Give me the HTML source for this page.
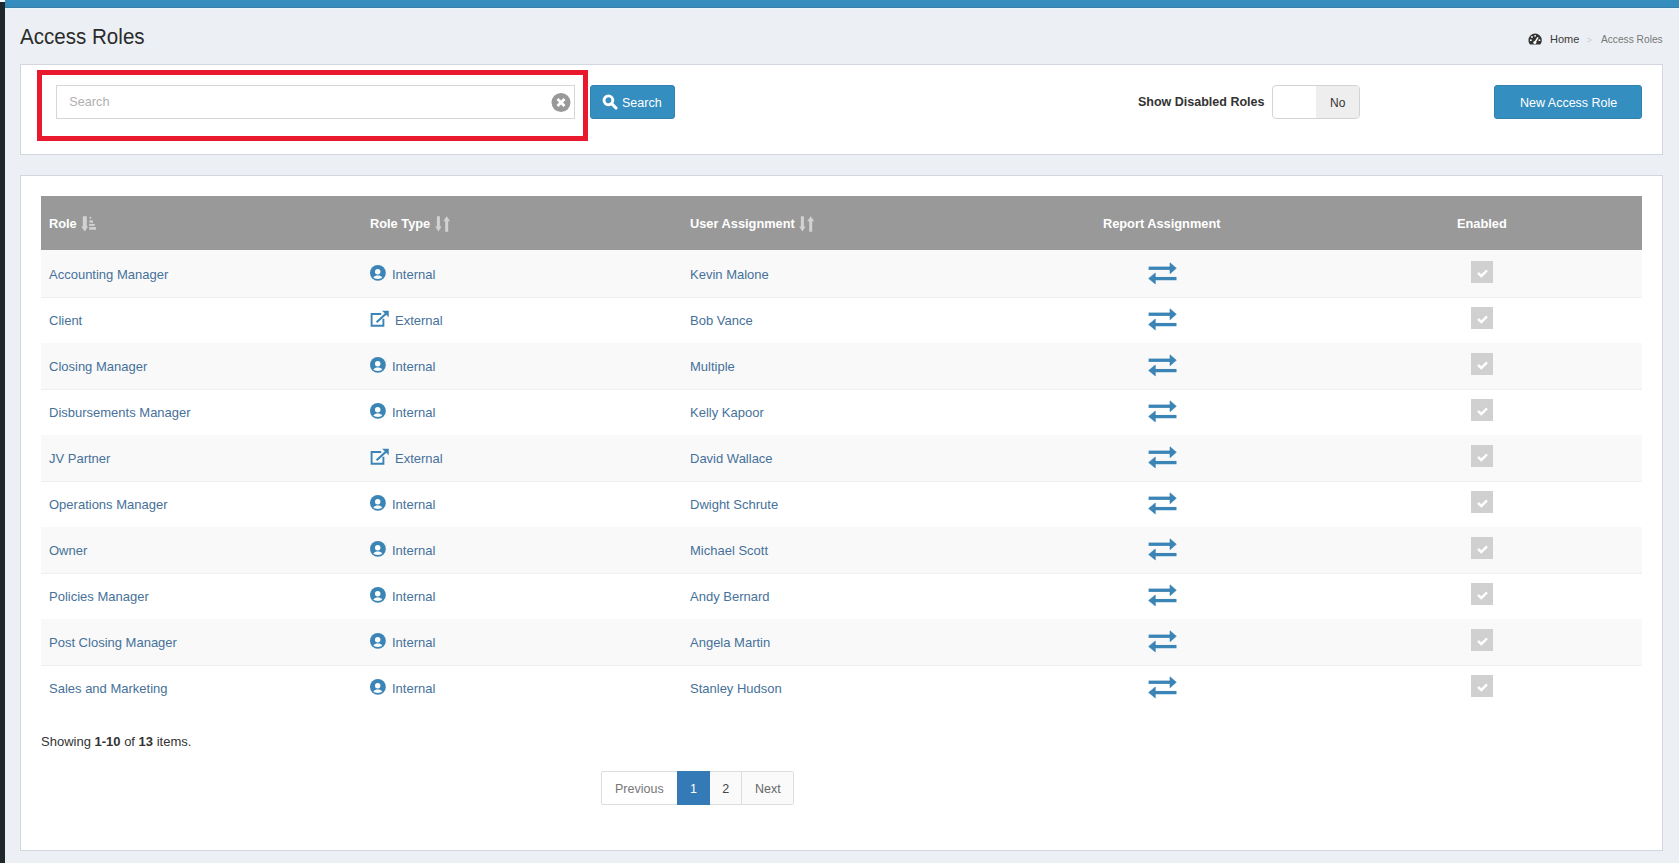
<!DOCTYPE html>
<html>
<head>
<meta charset="utf-8">
<style>
*{box-sizing:border-box;margin:0;padding:0}
html,body{width:1679px;height:863px;overflow:hidden}
body{background:#ecf0f5;font-family:"Liberation Sans",sans-serif;color:#333;position:relative}
.a{position:absolute;white-space:nowrap;line-height:20px}
.strip{position:absolute;left:0;top:2px;width:5px;height:861px;background:#1e282c}
.topbar{position:absolute;left:5px;top:0;width:1674px;height:8px;background:#348dbd;border-bottom:1px solid #3a7fa8}
.topline{position:absolute;left:5px;top:8px;width:1674px;height:1px;background:#e6f6fb}
.box{position:absolute;left:20px;width:1643px;background:#fff;border:1px solid #d2d6de}
.btn{position:absolute;background:#358ec0;border:1px solid #3282b0;border-radius:3px;color:#fff}
.th{position:absolute;top:196px;left:41px;width:1601px;height:54px;background:#999}
.row{position:absolute;left:41px;width:1601px;height:46px;border-top:1px solid #efefef}
.odd{background:#f9f9f9}
.lnk{color:#46719a;font-size:13px}
.hd{color:#fff;font-weight:bold;font-size:12.8px}
</style>
</head>
<body>
<div class="strip"></div><div style="position:absolute;left:0;top:0;width:5px;height:2px;background:#f4fbff"></div>
<div class="topbar"></div><div class="topline"></div>

<div class="a" style="left:20px;top:26.6px;font-size:22px;color:#2b2b2b;transform:scaleX(0.935);transform-origin:0 0">Access Roles</div>

<!-- breadcrumb -->
<svg class="a" style="left:1528.3px;top:32.6px;transform:scale(0.95);transform-origin:0 0" width="15" height="13" viewBox="0 0 15 13">
  <path d="M7.5 0.5 A7 7 0 0 0 0.5 7.5 C0.5 9.5 1.2 11 2.2 12 L12.8 12 C13.8 11 14.5 9.5 14.5 7.5 A7 7 0 0 0 7.5 0.5 Z" fill="#333"/>
  <circle cx="3" cy="7.5" r="1" fill="#fff"/><circle cx="4.2" cy="4.2" r="1" fill="#fff"/><circle cx="7.5" cy="3" r="1" fill="#fff"/><circle cx="12" cy="7.5" r="1" fill="#fff"/>
  <path d="M7 10.5 L10.5 4.5" stroke="#fff" stroke-width="1.6"/><circle cx="7.2" cy="10" r="1.6" fill="#fff"/>
</svg>
<div class="a" style="left:1550px;top:29px;font-size:11px;color:#3a3a3a">Home</div>
<div class="a" style="left:1586.5px;top:30px;font-size:9.5px;color:#ccc">&gt;</div>
<div class="a" style="left:1601px;top:29px;font-size:11px;color:#777;transform:scaleX(0.925);transform-origin:0 0">Access Roles</div>

<!-- box 1 -->
<div class="box" style="top:64px;height:91px"></div>
<div style="position:absolute;left:37px;top:70px;width:551px;height:71px;border:5px solid #e8192c"></div>
<div style="position:absolute;left:56px;top:85px;width:519px;height:34px;border:1px solid #d6d6d6;background:#fff"></div>
<div class="a" style="left:69.3px;top:92.4px;font-size:12.7px;color:#b0b0b0">Search</div>
<svg class="a" style="left:551px;top:93px" width="20" height="20" viewBox="0 0 20 20">
  <circle cx="10" cy="9.5" r="9.5" fill="#999"/>
  <path d="M6.5 6 L13.5 13 M13.5 6 L6.5 13" stroke="#fff" stroke-width="2.8"/>
</svg>
<div class="btn" style="left:590px;top:85px;width:85px;height:34px"></div>
<svg class="a" style="left:602px;top:94px" width="16" height="16" viewBox="0 0 16 16">
  <circle cx="6.4" cy="6.3" r="4.4" fill="none" stroke="#fff" stroke-width="2.9"/>
  <path d="M9.6 9.6 L14 14" stroke="#fff" stroke-width="3.1" stroke-linecap="round"/>
</svg>
<div class="a" style="left:622px;top:92.6px;font-size:12.5px;color:#fff">Search</div>

<div class="a" style="left:1138px;top:91.9px;font-size:12.5px;font-weight:bold;color:#333">Show Disabled Roles</div>
<div style="position:absolute;left:1272px;top:85px;width:88px;height:34px;border:1px solid #d3d3d3;border-radius:4px;background:#fff;overflow:hidden">
  <div style="position:absolute;left:43px;top:0;width:45px;height:34px;background:#eee"></div>
</div>
<div class="a" style="left:1330px;top:92.7px;font-size:12px;color:#333">No</div>

<div class="btn" style="left:1494px;top:85px;width:148px;height:34px"></div>
<div class="a" style="left:1520px;top:92.6px;font-size:12.5px;color:#fff">New Access Role</div>

<!-- box 2 -->
<div class="box" style="top:175px;height:676px"></div>
<div class="th"></div>
<!--ROWS-->
<div class="a hd" style="left:49px;top:213.9px">Role</div>
<svg class="a" style="left:81px;top:216px" width="16" height="16" viewBox="0 0 16 16"><path d="M1.8 0.3 H5.8 V10.6 H7 L3.8 15.5 L0.2 10.6 H1.8 Z" fill="#d2d2d2"/><rect x="8.6" y="0.8" width="1.6" height="2" fill="#d2d2d2"/><rect x="8.4" y="4.4" width="3.6" height="2.2" fill="#d2d2d2"/><rect x="8.2" y="7.9" width="5.5" height="2" fill="#d2d2d2"/><rect x="8.2" y="11.1" width="6.8" height="2.6" fill="#d2d2d2"/></svg>
<div class="a hd" style="left:370px;top:213.9px">Role Type</div>
<svg class="a" style="left:434.5px;top:216px" width="16" height="16" viewBox="0 0 16 16"><path d="M1.9 0.3 H4.9 V10.6 H6.6 L3.4 15.6 L0.2 10.6 H1.9 Z M10.2 15.8 H13.2 V5.3 H15.1 L11.7 0.2 L8.3 5.3 H10.2 Z" fill="#d2d2d2"/></svg>
<div class="a hd" style="left:690px;top:213.9px">User Assignment</div>
<svg class="a" style="left:799px;top:216px" width="16" height="16" viewBox="0 0 16 16"><path d="M1.9 0.3 H4.9 V10.6 H6.6 L3.4 15.6 L0.2 10.6 H1.9 Z M10.2 15.8 H13.2 V5.3 H15.1 L11.7 0.2 L8.3 5.3 H10.2 Z" fill="#d2d2d2"/></svg>
<div class="a hd" style="left:1001.6px;width:320.2px;text-align:center;top:213.9px">Report Assignment</div>
<div class="a hd" style="left:1321.8px;width:320.2px;text-align:center;top:213.9px">Enabled</div>
<div class="row odd" style="top:251px;border-top-color:#f9f9f9;top:250px;height:47px"></div>
<div class="a lnk" style="left:49px;top:265.0px">Accounting Manager</div>
<svg class="a" style="left:370px;top:265px" width="16" height="16" viewBox="0 0 16 16"><circle cx="7.9" cy="7.9" r="7.9" fill="#3a84b6"/><circle cx="7.7" cy="6.7" r="2.75" fill="#fff"/><path d="M3.4 12.5 C4.4 11.1 5.9 10.5 7.8 10.5 C9.7 10.5 11.2 11.1 12.2 12.5 C11.2 13.5 9.6 13.9 7.8 13.9 C6 13.9 4.4 13.5 3.4 12.5 Z" fill="#fff"/></svg>
<div class="a lnk" style="left:392px;top:265.0px">Internal</div>
<div class="a lnk" style="left:690px;top:265.0px">Kevin Malone</div>
<svg class="a" style="left:1147.5px;top:262px" width="30" height="23" viewBox="0 0 30 23"><path d="M0.6 6.25 H23" stroke="#3a84b6" stroke-width="3.3"/><path d="M22 0.8 L28.3 6.25 L22 11.7 Z" fill="#3a84b6" stroke="#3a84b6" stroke-width="0.6" stroke-linejoin="round"/><path d="M6.5 16.6 H28.5" stroke="#3a84b6" stroke-width="3.3"/><path d="M7.3 11 L0.6 16.5 L7.3 21.9 Z" fill="#3a84b6" stroke="#3a84b6" stroke-width="0.6" stroke-linejoin="round"/></svg>
<svg class="a" style="left:1471px;top:261px" width="22" height="22" viewBox="0 0 22 22"><rect width="22" height="22" fill="#d0d0d0"/><path d="M7 12 L10.3 15 L16 9.3" fill="none" stroke="#fff" stroke-width="2.4"/></svg>
<div class="row" style="top:297px"></div>
<div class="a lnk" style="left:49px;top:311.0px">Client</div>
<svg class="a" style="left:369.5px;top:310px" width="19" height="17" viewBox="0 0 19 17"><path d="M11.2 3.95 H1.6 V15.7 H13.4 V8.8" fill="none" stroke="#3a84b6" stroke-width="1.9"/><path d="M6.6 12.2 L16.2 3.4" stroke="#3a84b6" stroke-width="2.1"/><path d="M12.6 1 H18.5 V6.8 Z" fill="#3a84b6" stroke="#3a84b6" stroke-width="0.5"/></svg>
<div class="a lnk" style="left:395px;top:311.0px">External</div>
<div class="a lnk" style="left:690px;top:311.0px">Bob Vance</div>
<svg class="a" style="left:1147.5px;top:308px" width="30" height="23" viewBox="0 0 30 23"><path d="M0.6 6.25 H23" stroke="#3a84b6" stroke-width="3.3"/><path d="M22 0.8 L28.3 6.25 L22 11.7 Z" fill="#3a84b6" stroke="#3a84b6" stroke-width="0.6" stroke-linejoin="round"/><path d="M6.5 16.6 H28.5" stroke="#3a84b6" stroke-width="3.3"/><path d="M7.3 11 L0.6 16.5 L7.3 21.9 Z" fill="#3a84b6" stroke="#3a84b6" stroke-width="0.6" stroke-linejoin="round"/></svg>
<svg class="a" style="left:1471px;top:307px" width="22" height="22" viewBox="0 0 22 22"><rect width="22" height="22" fill="#d0d0d0"/><path d="M7 12 L10.3 15 L16 9.3" fill="none" stroke="#fff" stroke-width="2.4"/></svg>
<div class="row odd" style="top:343px;border-top-color:#f9f9f9"></div>
<div class="a lnk" style="left:49px;top:357.0px">Closing Manager</div>
<svg class="a" style="left:370px;top:357px" width="16" height="16" viewBox="0 0 16 16"><circle cx="7.9" cy="7.9" r="7.9" fill="#3a84b6"/><circle cx="7.7" cy="6.7" r="2.75" fill="#fff"/><path d="M3.4 12.5 C4.4 11.1 5.9 10.5 7.8 10.5 C9.7 10.5 11.2 11.1 12.2 12.5 C11.2 13.5 9.6 13.9 7.8 13.9 C6 13.9 4.4 13.5 3.4 12.5 Z" fill="#fff"/></svg>
<div class="a lnk" style="left:392px;top:357.0px">Internal</div>
<div class="a lnk" style="left:690px;top:357.0px">Multiple</div>
<svg class="a" style="left:1147.5px;top:354px" width="30" height="23" viewBox="0 0 30 23"><path d="M0.6 6.25 H23" stroke="#3a84b6" stroke-width="3.3"/><path d="M22 0.8 L28.3 6.25 L22 11.7 Z" fill="#3a84b6" stroke="#3a84b6" stroke-width="0.6" stroke-linejoin="round"/><path d="M6.5 16.6 H28.5" stroke="#3a84b6" stroke-width="3.3"/><path d="M7.3 11 L0.6 16.5 L7.3 21.9 Z" fill="#3a84b6" stroke="#3a84b6" stroke-width="0.6" stroke-linejoin="round"/></svg>
<svg class="a" style="left:1471px;top:353px" width="22" height="22" viewBox="0 0 22 22"><rect width="22" height="22" fill="#d0d0d0"/><path d="M7 12 L10.3 15 L16 9.3" fill="none" stroke="#fff" stroke-width="2.4"/></svg>
<div class="row" style="top:389px"></div>
<div class="a lnk" style="left:49px;top:403.0px">Disbursements Manager</div>
<svg class="a" style="left:370px;top:403px" width="16" height="16" viewBox="0 0 16 16"><circle cx="7.9" cy="7.9" r="7.9" fill="#3a84b6"/><circle cx="7.7" cy="6.7" r="2.75" fill="#fff"/><path d="M3.4 12.5 C4.4 11.1 5.9 10.5 7.8 10.5 C9.7 10.5 11.2 11.1 12.2 12.5 C11.2 13.5 9.6 13.9 7.8 13.9 C6 13.9 4.4 13.5 3.4 12.5 Z" fill="#fff"/></svg>
<div class="a lnk" style="left:392px;top:403.0px">Internal</div>
<div class="a lnk" style="left:690px;top:403.0px">Kelly Kapoor</div>
<svg class="a" style="left:1147.5px;top:400px" width="30" height="23" viewBox="0 0 30 23"><path d="M0.6 6.25 H23" stroke="#3a84b6" stroke-width="3.3"/><path d="M22 0.8 L28.3 6.25 L22 11.7 Z" fill="#3a84b6" stroke="#3a84b6" stroke-width="0.6" stroke-linejoin="round"/><path d="M6.5 16.6 H28.5" stroke="#3a84b6" stroke-width="3.3"/><path d="M7.3 11 L0.6 16.5 L7.3 21.9 Z" fill="#3a84b6" stroke="#3a84b6" stroke-width="0.6" stroke-linejoin="round"/></svg>
<svg class="a" style="left:1471px;top:399px" width="22" height="22" viewBox="0 0 22 22"><rect width="22" height="22" fill="#d0d0d0"/><path d="M7 12 L10.3 15 L16 9.3" fill="none" stroke="#fff" stroke-width="2.4"/></svg>
<div class="row odd" style="top:435px;border-top-color:#f9f9f9"></div>
<div class="a lnk" style="left:49px;top:449.0px">JV Partner</div>
<svg class="a" style="left:369.5px;top:448px" width="19" height="17" viewBox="0 0 19 17"><path d="M11.2 3.95 H1.6 V15.7 H13.4 V8.8" fill="none" stroke="#3a84b6" stroke-width="1.9"/><path d="M6.6 12.2 L16.2 3.4" stroke="#3a84b6" stroke-width="2.1"/><path d="M12.6 1 H18.5 V6.8 Z" fill="#3a84b6" stroke="#3a84b6" stroke-width="0.5"/></svg>
<div class="a lnk" style="left:395px;top:449.0px">External</div>
<div class="a lnk" style="left:690px;top:449.0px">David Wallace</div>
<svg class="a" style="left:1147.5px;top:446px" width="30" height="23" viewBox="0 0 30 23"><path d="M0.6 6.25 H23" stroke="#3a84b6" stroke-width="3.3"/><path d="M22 0.8 L28.3 6.25 L22 11.7 Z" fill="#3a84b6" stroke="#3a84b6" stroke-width="0.6" stroke-linejoin="round"/><path d="M6.5 16.6 H28.5" stroke="#3a84b6" stroke-width="3.3"/><path d="M7.3 11 L0.6 16.5 L7.3 21.9 Z" fill="#3a84b6" stroke="#3a84b6" stroke-width="0.6" stroke-linejoin="round"/></svg>
<svg class="a" style="left:1471px;top:445px" width="22" height="22" viewBox="0 0 22 22"><rect width="22" height="22" fill="#d0d0d0"/><path d="M7 12 L10.3 15 L16 9.3" fill="none" stroke="#fff" stroke-width="2.4"/></svg>
<div class="row" style="top:481px"></div>
<div class="a lnk" style="left:49px;top:495.0px">Operations Manager</div>
<svg class="a" style="left:370px;top:495px" width="16" height="16" viewBox="0 0 16 16"><circle cx="7.9" cy="7.9" r="7.9" fill="#3a84b6"/><circle cx="7.7" cy="6.7" r="2.75" fill="#fff"/><path d="M3.4 12.5 C4.4 11.1 5.9 10.5 7.8 10.5 C9.7 10.5 11.2 11.1 12.2 12.5 C11.2 13.5 9.6 13.9 7.8 13.9 C6 13.9 4.4 13.5 3.4 12.5 Z" fill="#fff"/></svg>
<div class="a lnk" style="left:392px;top:495.0px">Internal</div>
<div class="a lnk" style="left:690px;top:495.0px">Dwight Schrute</div>
<svg class="a" style="left:1147.5px;top:492px" width="30" height="23" viewBox="0 0 30 23"><path d="M0.6 6.25 H23" stroke="#3a84b6" stroke-width="3.3"/><path d="M22 0.8 L28.3 6.25 L22 11.7 Z" fill="#3a84b6" stroke="#3a84b6" stroke-width="0.6" stroke-linejoin="round"/><path d="M6.5 16.6 H28.5" stroke="#3a84b6" stroke-width="3.3"/><path d="M7.3 11 L0.6 16.5 L7.3 21.9 Z" fill="#3a84b6" stroke="#3a84b6" stroke-width="0.6" stroke-linejoin="round"/></svg>
<svg class="a" style="left:1471px;top:491px" width="22" height="22" viewBox="0 0 22 22"><rect width="22" height="22" fill="#d0d0d0"/><path d="M7 12 L10.3 15 L16 9.3" fill="none" stroke="#fff" stroke-width="2.4"/></svg>
<div class="row odd" style="top:527px;border-top-color:#f9f9f9"></div>
<div class="a lnk" style="left:49px;top:541.0px">Owner</div>
<svg class="a" style="left:370px;top:541px" width="16" height="16" viewBox="0 0 16 16"><circle cx="7.9" cy="7.9" r="7.9" fill="#3a84b6"/><circle cx="7.7" cy="6.7" r="2.75" fill="#fff"/><path d="M3.4 12.5 C4.4 11.1 5.9 10.5 7.8 10.5 C9.7 10.5 11.2 11.1 12.2 12.5 C11.2 13.5 9.6 13.9 7.8 13.9 C6 13.9 4.4 13.5 3.4 12.5 Z" fill="#fff"/></svg>
<div class="a lnk" style="left:392px;top:541.0px">Internal</div>
<div class="a lnk" style="left:690px;top:541.0px">Michael Scott</div>
<svg class="a" style="left:1147.5px;top:538px" width="30" height="23" viewBox="0 0 30 23"><path d="M0.6 6.25 H23" stroke="#3a84b6" stroke-width="3.3"/><path d="M22 0.8 L28.3 6.25 L22 11.7 Z" fill="#3a84b6" stroke="#3a84b6" stroke-width="0.6" stroke-linejoin="round"/><path d="M6.5 16.6 H28.5" stroke="#3a84b6" stroke-width="3.3"/><path d="M7.3 11 L0.6 16.5 L7.3 21.9 Z" fill="#3a84b6" stroke="#3a84b6" stroke-width="0.6" stroke-linejoin="round"/></svg>
<svg class="a" style="left:1471px;top:537px" width="22" height="22" viewBox="0 0 22 22"><rect width="22" height="22" fill="#d0d0d0"/><path d="M7 12 L10.3 15 L16 9.3" fill="none" stroke="#fff" stroke-width="2.4"/></svg>
<div class="row" style="top:573px"></div>
<div class="a lnk" style="left:49px;top:587.0px">Policies Manager</div>
<svg class="a" style="left:370px;top:587px" width="16" height="16" viewBox="0 0 16 16"><circle cx="7.9" cy="7.9" r="7.9" fill="#3a84b6"/><circle cx="7.7" cy="6.7" r="2.75" fill="#fff"/><path d="M3.4 12.5 C4.4 11.1 5.9 10.5 7.8 10.5 C9.7 10.5 11.2 11.1 12.2 12.5 C11.2 13.5 9.6 13.9 7.8 13.9 C6 13.9 4.4 13.5 3.4 12.5 Z" fill="#fff"/></svg>
<div class="a lnk" style="left:392px;top:587.0px">Internal</div>
<div class="a lnk" style="left:690px;top:587.0px">Andy Bernard</div>
<svg class="a" style="left:1147.5px;top:584px" width="30" height="23" viewBox="0 0 30 23"><path d="M0.6 6.25 H23" stroke="#3a84b6" stroke-width="3.3"/><path d="M22 0.8 L28.3 6.25 L22 11.7 Z" fill="#3a84b6" stroke="#3a84b6" stroke-width="0.6" stroke-linejoin="round"/><path d="M6.5 16.6 H28.5" stroke="#3a84b6" stroke-width="3.3"/><path d="M7.3 11 L0.6 16.5 L7.3 21.9 Z" fill="#3a84b6" stroke="#3a84b6" stroke-width="0.6" stroke-linejoin="round"/></svg>
<svg class="a" style="left:1471px;top:583px" width="22" height="22" viewBox="0 0 22 22"><rect width="22" height="22" fill="#d0d0d0"/><path d="M7 12 L10.3 15 L16 9.3" fill="none" stroke="#fff" stroke-width="2.4"/></svg>
<div class="row odd" style="top:619px;border-top-color:#f9f9f9"></div>
<div class="a lnk" style="left:49px;top:633.0px">Post Closing Manager</div>
<svg class="a" style="left:370px;top:633px" width="16" height="16" viewBox="0 0 16 16"><circle cx="7.9" cy="7.9" r="7.9" fill="#3a84b6"/><circle cx="7.7" cy="6.7" r="2.75" fill="#fff"/><path d="M3.4 12.5 C4.4 11.1 5.9 10.5 7.8 10.5 C9.7 10.5 11.2 11.1 12.2 12.5 C11.2 13.5 9.6 13.9 7.8 13.9 C6 13.9 4.4 13.5 3.4 12.5 Z" fill="#fff"/></svg>
<div class="a lnk" style="left:392px;top:633.0px">Internal</div>
<div class="a lnk" style="left:690px;top:633.0px">Angela Martin</div>
<svg class="a" style="left:1147.5px;top:630px" width="30" height="23" viewBox="0 0 30 23"><path d="M0.6 6.25 H23" stroke="#3a84b6" stroke-width="3.3"/><path d="M22 0.8 L28.3 6.25 L22 11.7 Z" fill="#3a84b6" stroke="#3a84b6" stroke-width="0.6" stroke-linejoin="round"/><path d="M6.5 16.6 H28.5" stroke="#3a84b6" stroke-width="3.3"/><path d="M7.3 11 L0.6 16.5 L7.3 21.9 Z" fill="#3a84b6" stroke="#3a84b6" stroke-width="0.6" stroke-linejoin="round"/></svg>
<svg class="a" style="left:1471px;top:629px" width="22" height="22" viewBox="0 0 22 22"><rect width="22" height="22" fill="#d0d0d0"/><path d="M7 12 L10.3 15 L16 9.3" fill="none" stroke="#fff" stroke-width="2.4"/></svg>
<div class="row" style="top:665px"></div>
<div class="a lnk" style="left:49px;top:679.0px">Sales and Marketing</div>
<svg class="a" style="left:370px;top:679px" width="16" height="16" viewBox="0 0 16 16"><circle cx="7.9" cy="7.9" r="7.9" fill="#3a84b6"/><circle cx="7.7" cy="6.7" r="2.75" fill="#fff"/><path d="M3.4 12.5 C4.4 11.1 5.9 10.5 7.8 10.5 C9.7 10.5 11.2 11.1 12.2 12.5 C11.2 13.5 9.6 13.9 7.8 13.9 C6 13.9 4.4 13.5 3.4 12.5 Z" fill="#fff"/></svg>
<div class="a lnk" style="left:392px;top:679.0px">Internal</div>
<div class="a lnk" style="left:690px;top:679.0px">Stanley Hudson</div>
<svg class="a" style="left:1147.5px;top:676px" width="30" height="23" viewBox="0 0 30 23"><path d="M0.6 6.25 H23" stroke="#3a84b6" stroke-width="3.3"/><path d="M22 0.8 L28.3 6.25 L22 11.7 Z" fill="#3a84b6" stroke="#3a84b6" stroke-width="0.6" stroke-linejoin="round"/><path d="M6.5 16.6 H28.5" stroke="#3a84b6" stroke-width="3.3"/><path d="M7.3 11 L0.6 16.5 L7.3 21.9 Z" fill="#3a84b6" stroke="#3a84b6" stroke-width="0.6" stroke-linejoin="round"/></svg>
<svg class="a" style="left:1471px;top:675px" width="22" height="22" viewBox="0 0 22 22"><rect width="22" height="22" fill="#d0d0d0"/><path d="M7 12 L10.3 15 L16 9.3" fill="none" stroke="#fff" stroke-width="2.4"/></svg>
<div class="a" style="left:41px;top:732px;font-size:13px;color:#333">Showing <b>1-10</b> of <b>13</b> items.</div>
<div style="position:absolute;left:601px;top:771px;width:193px;height:34px;border:1px solid #ddd;border-radius:2px;background:#fff"></div>
<div style="position:absolute;left:710px;top:772px;width:32px;height:32px;background:#fafafa;border-right:1px solid #ddd"></div>
<div style="position:absolute;left:742px;top:772px;width:51px;height:32px;background:#fafafa"></div>
<div style="position:absolute;left:677px;top:771px;width:33px;height:34px;background:#337ab7"></div>
<div class="a" style="left:615px;top:778.5px;font-size:12.5px;color:#777">Previous</div>
<div class="a" style="left:677px;width:33px;text-align:center;top:778.5px;font-size:12.5px;color:#fff">1</div>
<div class="a" style="left:710px;width:31.5px;text-align:center;top:778.5px;font-size:12.5px;color:#444">2</div>
<div class="a" style="left:755px;top:778.5px;font-size:12.5px;color:#666">Next</div>
<!--/ROWS-->
</body>
</html>
